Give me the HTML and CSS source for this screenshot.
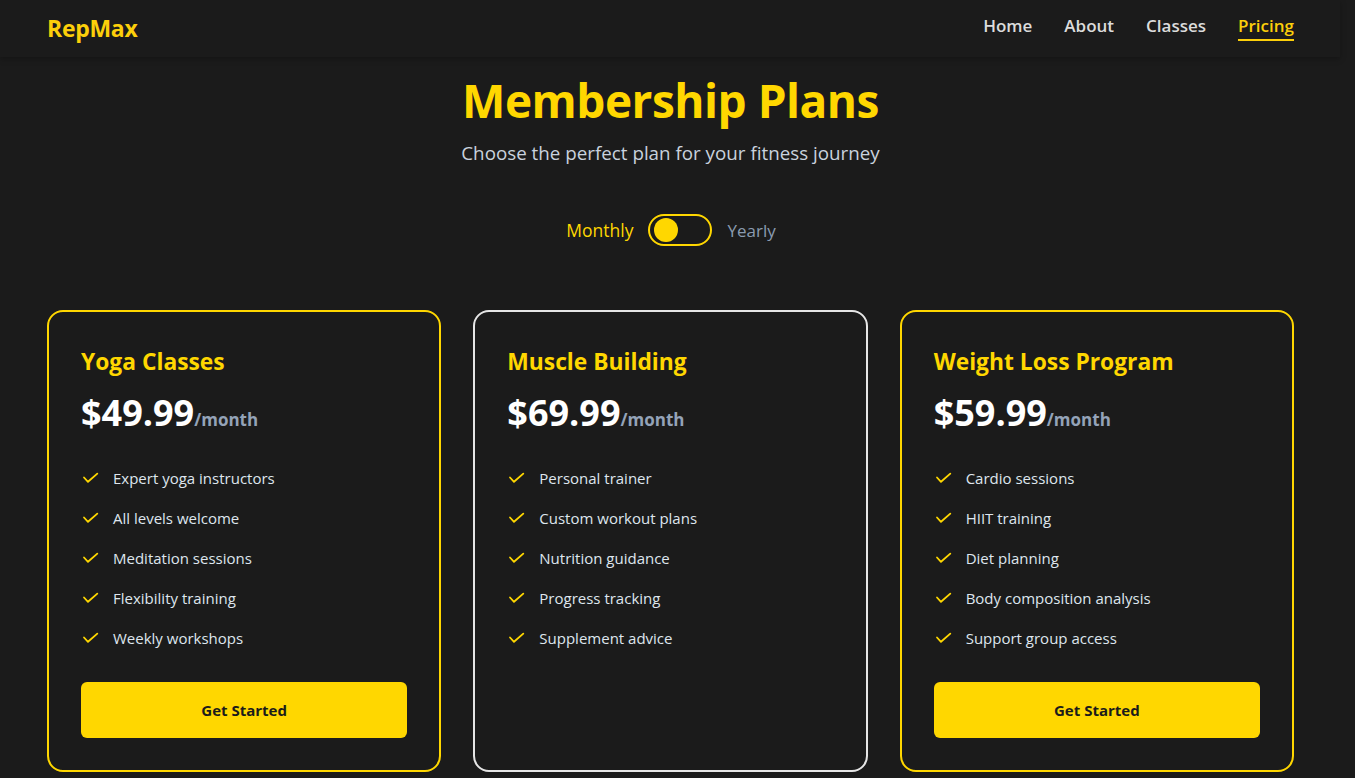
FILE: index.html
```html
<!DOCTYPE html>
<html lang="en">
<head>
<meta charset="utf-8">
<title>RepMax - Pricing</title>
<link rel="stylesheet" href="styles.css">
</head>
<body>
<div class="page">
  <header class="site-header">
    <a class="logo" href="#">RepMax</a>
    <nav class="nav">
      <a href="#" class="nav-link">Home</a>
      <a href="#" class="nav-link">About</a>
      <a href="#" class="nav-link">Classes</a>
      <a href="#" class="nav-link active">Pricing</a>
    </nav>
  </header>

  <main class="pricing">
    <section class="hero">
      <h1 class="hero-title">Membership Plans</h1>
      <p class="hero-sub">Choose the perfect plan for your fitness journey</p>
    </section>

    <div class="billing-toggle">
      <span class="toggle-label on">Monthly</span>
      <span class="switch"><span class="knob"></span></span>
      <span class="toggle-label off">Yearly</span>
    </div>

    <div class="plans">
      <article class="plan">
        <h2 class="plan-name">Yoga Classes</h2>
        <div class="plan-price"><span class="amount">$49.99</span><span class="period">/month</span></div>
        <ul class="features">
          <li><svg class="check" viewBox="0 0 18 16"><path d="M3 7.5 L7 11.8 L16.3 3.6"/></svg>Expert yoga instructors</li>
          <li><svg class="check" viewBox="0 0 18 16"><path d="M3 7.5 L7 11.8 L16.3 3.6"/></svg>All levels welcome</li>
          <li><svg class="check" viewBox="0 0 18 16"><path d="M3 7.5 L7 11.8 L16.3 3.6"/></svg>Meditation sessions</li>
          <li><svg class="check" viewBox="0 0 18 16"><path d="M3 7.5 L7 11.8 L16.3 3.6"/></svg>Flexibility training</li>
          <li><svg class="check" viewBox="0 0 18 16"><path d="M3 7.5 L7 11.8 L16.3 3.6"/></svg>Weekly workshops</li>
        </ul>
        <a href="#" class="btn">Get Started</a>
      </article>

      <article class="plan featured">
        <h2 class="plan-name">Muscle Building</h2>
        <div class="plan-price"><span class="amount">$69.99</span><span class="period">/month</span></div>
        <ul class="features">
          <li><svg class="check" viewBox="0 0 18 16"><path d="M3 7.5 L7 11.8 L16.3 3.6"/></svg>Personal trainer</li>
          <li><svg class="check" viewBox="0 0 18 16"><path d="M3 7.5 L7 11.8 L16.3 3.6"/></svg>Custom workout plans</li>
          <li><svg class="check" viewBox="0 0 18 16"><path d="M3 7.5 L7 11.8 L16.3 3.6"/></svg>Nutrition guidance</li>
          <li><svg class="check" viewBox="0 0 18 16"><path d="M3 7.5 L7 11.8 L16.3 3.6"/></svg>Progress tracking</li>
          <li><svg class="check" viewBox="0 0 18 16"><path d="M3 7.5 L7 11.8 L16.3 3.6"/></svg>Supplement advice</li>
        </ul>
      </article>

      <article class="plan">
        <h2 class="plan-name">Weight Loss Program</h2>
        <div class="plan-price"><span class="amount">$59.99</span><span class="period">/month</span></div>
        <ul class="features">
          <li><svg class="check" viewBox="0 0 18 16"><path d="M3 7.5 L7 11.8 L16.3 3.6"/></svg>Cardio sessions</li>
          <li><svg class="check" viewBox="0 0 18 16"><path d="M3 7.5 L7 11.8 L16.3 3.6"/></svg>HIIT training</li>
          <li><svg class="check" viewBox="0 0 18 16"><path d="M3 7.5 L7 11.8 L16.3 3.6"/></svg>Diet planning</li>
          <li><svg class="check" viewBox="0 0 18 16"><path d="M3 7.5 L7 11.8 L16.3 3.6"/></svg>Body composition analysis</li>
          <li><svg class="check" viewBox="0 0 18 16"><path d="M3 7.5 L7 11.8 L16.3 3.6"/></svg>Support group access</li>
        </ul>
        <a href="#" class="btn">Get Started</a>
      </article>
    </div>
  </main>
</div>
</body>
</html>
```

FILE: styles.css
```css
* {
  box-sizing: border-box;
}

html, body {
  margin: 0;
  padding: 0;
  background: #1b1b1b;
  overflow: hidden;
}

body {
  font-family: "Open Sans", "Noto Sans", "Liberation Sans", sans-serif;
  color: #e2e8f0;
}

.page {
  width: 1340px;
}

a {
  text-decoration: none;
}

.site-header {
  height: 57px;
  padding: 0 46px 0 47px;
  display: flex;
  align-items: center;
  justify-content: space-between;
  background: #1b1b1b;
  box-shadow: 0 2px 6px rgba(0, 0, 0, 0.25);
  position: relative;
}

.logo {
  color: #fccf0a;
  font-size: 23px;
  font-weight: 700;
  letter-spacing: -0.3px;
  margin-top: -2px;
}

.nav {
  display: flex;
  gap: 32px;
  align-items: center;
}

.nav-link {
  color: #dcdcdc;
  font-size: 17px;
  font-weight: 600;
  line-height: 24px;
  padding-bottom: 1px;
  border-bottom: 2px solid transparent;
  margin-top: -3px;
}

.nav-link.active {
  color: #fccf0a;
  border-bottom-color: #fccf0a;
}

.pricing {
  padding: 0 46px 0 47px;
}

.hero {
  text-align: center;
  padding-top: 16px;
}

.hero-title {
  margin: 0;
  font-size: 46px;
  line-height: 1.2;
  font-weight: 700;
  color: #ffd700;
  letter-spacing: -0.5px;
}

.hero-sub {
  margin: 11px 0 0;
  font-size: 18.8px;
  line-height: 28px;
  color: #c9d2de;
}

.billing-toggle {
  margin-top: 47px;
  display: flex;
  justify-content: center;
  align-items: center;
  gap: 15px;
  height: 32px;
  padding-left: 1px;
}

.toggle-label {
  font-size: 17.5px;
}

.toggle-label.on {
  color: #ffd700;
}

.toggle-label.off {
  color: #8a9bb0;
  font-size: 17px;
}

.switch {
  width: 64px;
  height: 32px;
  border: 2px solid #ffd700;
  border-radius: 16px;
  display: flex;
  align-items: center;
  padding-left: 4px;
}

.knob {
  width: 24px;
  height: 24px;
  border-radius: 50%;
  background: #ffd700;
}

.plans {
  margin-top: 64px;
  display: grid;
  grid-template-columns: repeat(3, 1fr);
  gap: 32px;
}

.plan {
  border: 2px solid #ffd700;
  border-radius: 16px;
  padding: 36px 32px 32px;
  background: #1b1b1b;
  display: flex;
  flex-direction: column;
}

.plan.featured {
  border-color: #e6e6e6;
}

.plan-name {
  margin: 0;
  font-size: 22.8px;
  line-height: 1.2;
  font-weight: 700;
  color: #ffd700;
}

.plan-price {
  margin-top: 13px;
  line-height: 48px;
}

.amount {
  font-size: 36px;
  font-weight: 700;
  color: #ffffff;
}

.period {
  font-size: 17px;
  font-weight: 700;
  color: #94a3b8;
}

.features {
  list-style: none;
  margin: 22px 0 0;
  padding: 0;
  display: flex;
  flex-direction: column;
  gap: 16px;
}

.features li {
  display: flex;
  align-items: center;
  gap: 14px;
  font-size: 15px;
  line-height: 24px;
  color: #dfe6ee;
}

.check {
  width: 18px;
  height: 16px;
  flex: none;
  fill: none;
  stroke: #ffd700;
  stroke-width: 1.8;
  stroke-linecap: round;
  stroke-linejoin: round;
}

.btn {
  margin-top: 32px;
  height: 56px;
  display: flex;
  align-items: center;
  justify-content: center;
  background: #ffd700;
  color: #1b1b1b;
  border-radius: 6px;
  font-size: 15px;
  font-weight: 700;
}
```
